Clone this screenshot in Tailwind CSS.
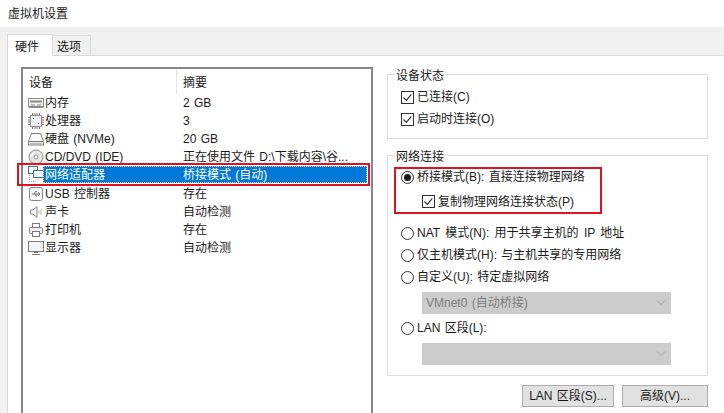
<!DOCTYPE html>
<html lang="zh-CN">
<head>
  <meta charset="UTF-8" />
  <title>虚拟机设置</title>
  <script src="https://cdn.jsdelivr.net/npm/@tailwindcss/browser@4"></script>
</head>
<body class="w-[724px] h-[413px] overflow-hidden bg-[#f0f0f0] text-[12px] leading-[18px] text-[#1a1a1a] [word-spacing:1px] font-['Liberation_Sans','Noto_Sans_CJK_SC',sans-serif]">
  <!-- title bar -->
  <div class="h-[27px] bg-white pl-[8px] pt-[5px]">虚拟机设置</div>

  <!-- tabs -->
  <div class="flex items-end h-[29px] pl-[7px] relative z-10">
    <div class="h-[22px] w-[46px] bg-white border border-b-0 border-[#d9d9d9] pl-[7px] leading-[24px]">硬件</div>
    <div class="h-[20px] w-[38px] mb-[1px] border border-b-0 border-l-0 border-[#d9d9d9] pl-[4px] leading-[22px]">选项</div>
  </div>

  <!-- tab panel -->
  <div class="ml-[7px] mt-[-1px] w-[717px] h-[358px] bg-white border-l border-t border-[#d9d9d9] flex pl-[13px] pt-[11px]">
    <!-- device list -->
    <div class="w-[352px] h-[347px] shrink-0 border-2 border-b-0 border-[#85858b]">
      <div class="flex h-[25px]">
        <div class="w-[154px] pl-[6px] pt-[3px] border-r border-[#e5e5e5] leading-[22px]">设备</div>
        <div class="pl-[6px] pt-[3px] leading-[22px]">摘要</div>
      </div>
      <div class="flex flex-col">
        <div class="flex h-[18px] items-center">
          <div class="w-[20px] pl-[5px] shrink-0"><svg class="block" width="16" height="16" viewBox="0 0 16 16" fill="none" stroke="#8a8a8a"><rect x="0.5" y="3.5" width="15" height="8" fill="#f2f2f2"/><path d="M2 6.5h12" stroke="#8a8a8a" stroke-width="2"/><path d="M1 11.5v1h14v-1M3 10h4M9 10h4"/></svg></div>
          <div class="w-[140px] pl-[2px] shrink-0">内存</div><div>2 GB</div>
        </div>
        <div class="flex h-[18px] items-center">
          <div class="w-[20px] pl-[5px] shrink-0"><svg class="block" width="16" height="16" viewBox="0 0 16 16" fill="none" stroke="#8a8a8a"><rect x="2.5" y="2.5" width="11" height="11" fill="#f4f4f4"/><path d="M4.5 0v2M7 0v2M9 0v2M11.5 0v2M4.5 14v2M7 14v2M9 14v2M11.5 14v2M0 4.5h2M0 7h2M0 9h2M0 11.5h2M14 4.5h2M14 7h2M14 9h2M14 11.5h2" stroke="#777"/><rect x="5" y="5" width="1" height="1" fill="#777" stroke="none"/><rect x="10" y="10" width="1" height="1" fill="#777" stroke="none"/></svg></div>
          <div class="w-[140px] pl-[2px] shrink-0">处理器</div><div>3</div>
        </div>
        <div class="flex h-[18px] items-center">
          <div class="w-[20px] pl-[5px] shrink-0"><svg class="block" width="16" height="16" viewBox="0 0 16 16" fill="none" stroke="#7d7d7d"><path d="M3.5 2.5h9l3 8v3.500h-15v-3.500z" fill="#fafafa"/><path d="M.5 10.500h15"/><path d="M2 12.300h12" stroke="#aaa"/></svg></div>
          <div class="w-[140px] pl-[2px] shrink-0">硬盘 (NVMe)</div><div>20 GB</div>
        </div>
        <div class="flex h-[18px] items-center">
          <div class="w-[20px] pl-[5px] shrink-0"><svg class="block" width="16" height="16" viewBox="0 0 16 16" fill="none" stroke="#8a8a8a"><circle cx="8" cy="8" r="7" fill="#e6e6e6"/><circle cx="8" cy="8" r="2" fill="#fff"/><path d="M3.500 8a4.500 4.500 0 0 1 3-4.200" stroke="#fff"/></svg></div>
          <div class="w-[140px] pl-[2px] shrink-0">CD/DVD (IDE)</div><div class="w-[172px] whitespace-nowrap overflow-hidden">正在使用文件 D:\下载内容\谷...</div>
        </div>
        <div class="relative flex h-[19px] items-start">
          <div class="w-[20px] pl-[5px] shrink-0"><svg class="block" width="16" height="16" viewBox="0 0 16 16" fill="none" stroke="#3f6f98"><rect x="0.500" y="0.500" width="9" height="7" fill="#f4f8fb"/><rect x="5.500" y="4.500" width="10" height="7" fill="#f4f8fb"/><path d="M1.500 9v6.500h7" stroke="#7fa6c8" stroke-dasharray="1 1"/></svg></div>
          <div class="flex flex-1 h-[17px] mr-[4px] leading-[19px] bg-[#0078d7] text-white outline-1 outline-dotted outline-[#f5c98a] -outline-offset-1">
            <div class="w-[140px] pl-[2px] shrink-0">网络适配器</div><div>桥接模式 (自动)</div>
          </div>
          <div class="absolute left-[-6px] right-[1px] top-[-3px] h-[23px] border-[2px] border-[#e0121f]"></div>
        </div>
        <div class="flex h-[18px] items-center">
          <div class="w-[20px] pl-[5px] shrink-0"><svg class="block" width="16" height="16" viewBox="0 0 16 16" fill="none" stroke="#8a8a8a"><rect x="1.500" y="1.500" width="13" height="13" rx="2" fill="#f6f6f6"/><path d="M4 8h8M10 6.500l2 1.500-2 1.500M6 8l1.500-2.500H9M7 8l1 2h1" stroke="#777"/></svg></div>
          <div class="w-[140px] pl-[2px] shrink-0">USB 控制器</div><div>存在</div>
        </div>
        <div class="flex h-[18px] items-center">
          <div class="w-[20px] pl-[5px] shrink-0"><svg class="block" width="16" height="16" viewBox="0 0 16 16" fill="none" stroke="#8a8a8a"><path d="M2.500 6v4h2.500l4 3.500v-11l-4 3.500z" fill="#f2f2f2"/><path d="M11 6.500v3M13 5v6" stroke="#b0b0b0"/></svg></div>
          <div class="w-[140px] pl-[2px] shrink-0">声卡</div><div>自动检测</div>
        </div>
        <div class="flex h-[18px] items-center">
          <div class="w-[20px] pl-[5px] shrink-0"><svg class="block" width="16" height="16" viewBox="0 0 16 16" fill="none" stroke="#7a7a7a"><rect x="4.500" y="1.500" width="7" height="4" fill="#fff"/><rect x="1.500" y="5.500" width="13" height="6" rx="1" fill="#efefef"/><rect x="4.500" y="9.500" width="7" height="5" fill="#fff"/></svg></div>
          <div class="w-[140px] pl-[2px] shrink-0">打印机</div><div>存在</div>
        </div>
        <div class="flex h-[18px] items-center">
          <div class="w-[20px] pl-[5px] shrink-0"><svg class="block" width="16" height="16" viewBox="0 0 16 16" fill="none" stroke="#7a7a7a"><rect x="0.500" y="1.500" width="15" height="10" fill="#f4f4f4"/><path d="M6 12.500h4M4 14.500h8"/></svg></div>
          <div class="w-[140px] pl-[2px] shrink-0">显示器</div><div>自动检测</div>
        </div>
      </div>
    </div>

    <!-- right column -->
    <div class="w-[321px] ml-[14px] mt-[7px] shrink-0 flex flex-col">
      <!-- device state -->
      <div class="relative h-[65px] border border-[#dcdcdc] pl-[13px] pt-[11px]">
        <div class="absolute left-[7px] top-[-8px] px-[1px] bg-white">设备状态</div>
        <div class="flex items-center gap-[3px] h-[22px]">
          <div class="w-[13px] h-[13px] border border-[#333]"><svg class="block" width="11" height="11" viewBox="0 0 11 11" fill="none" stroke="#333" stroke-width="1.200"><path d="M1.500 5.500l2.800 2.800 5-6"/></svg></div>
          <span>已连接(C)</span>
        </div>
        <div class="flex items-center gap-[3px] h-[22px]">
          <div class="w-[13px] h-[13px] border border-[#333]"><svg class="block" width="11" height="11" viewBox="0 0 11 11" fill="none" stroke="#333" stroke-width="1.200"><path d="M1.500 5.500l2.800 2.800 5-6"/></svg></div>
          <span>启动时连接(O)</span>
        </div>
      </div>

      <!-- network -->
      <div class="relative h-[221px] mt-[16px] border border-[#dcdcdc] pl-[13px] pt-[10px]">
        <div class="absolute left-[7px] top-[-8px] px-[1px] bg-white">网络连接</div>
        <div class="relative">
          <div class="flex items-center gap-[3px] h-[22px]">
            <div class="w-[13px] h-[13px] rounded-full border border-[#333] flex items-center justify-center"><div class="w-[7px] h-[7px] rounded-full bg-[#1a1a1a]"></div></div>
            <span>桥接模式(B): 直接连接物理网络</span>
          </div>
          <div class="flex items-center gap-[3px] h-[27px] pl-[21px]">
            <div class="w-[13px] h-[13px] border border-[#333]"><svg class="block" width="11" height="11" viewBox="0 0 11 11" fill="none" stroke="#333" stroke-width="1.200"><path d="M1.500 5.500l2.800 2.800 5-6"/></svg></div>
            <span>复制物理网络连接状态(P)</span>
          </div>
          <div class="absolute left-[-7px] top-[1px] w-[208px] h-[47px] border-[2px] border-[#e0121f]"></div>
        </div>
        <div class="mt-[7px] flex items-center gap-[3px] h-[22px]">
          <div class="w-[13px] h-[13px] rounded-full border border-[#333]"></div>
          <span class="[word-spacing:2px]">NAT 模式(N): 用于共享主机的 IP 地址</span>
        </div>
        <div class="flex items-center gap-[3px] h-[22px]">
          <div class="w-[13px] h-[13px] rounded-full border border-[#333]"></div>
          <span>仅主机模式(H): 与主机共享的专用网络</span>
        </div>
        <div class="flex items-center gap-[3px] h-[22px]">
          <div class="w-[13px] h-[13px] rounded-full border border-[#333]"></div>
          <span>自定义(U): 特定虚拟网络</span>
        </div>
        <div class="mt-[4px] ml-[21px] w-[249px] h-[22px] bg-[#cccccc] flex items-center justify-between pl-[4px] pr-[5px] text-[#7d7d7d]">
          <span>VMnet0 (自动桥接)</span>
          <svg width="10" height="6" viewBox="0 0 10 6" fill="none" stroke="#a8a8a8"><path d="M1 .5l4 4 4-4"/></svg>
        </div>
        <div class="mt-[3px] flex items-center gap-[3px] h-[22px]">
          <div class="w-[13px] h-[13px] rounded-full border border-[#333]"></div>
          <span>LAN 区段(L):</span>
        </div>
        <div class="mt-[4px] ml-[21px] w-[249px] h-[22px] bg-[#cccccc] flex items-center justify-end pr-[5px]">
          <svg width="10" height="6" viewBox="0 0 10 6" fill="none" stroke="#a8a8a8"><path d="M1 .5l4 4 4-4"/></svg>
        </div>
      </div>

      <!-- buttons -->
      <div class="flex justify-end gap-[8px] mt-[9px]">
        <div class="w-[92px] h-[22px] bg-[#e1e1e1] border border-[#adadad] text-center leading-[20px]">LAN 区段(S)...</div>
        <div class="w-[86px] h-[22px] bg-[#e1e1e1] border border-[#adadad] text-center leading-[20px]">高级(V)...</div>
      </div>
    </div>
  </div>
</body>
</html>
